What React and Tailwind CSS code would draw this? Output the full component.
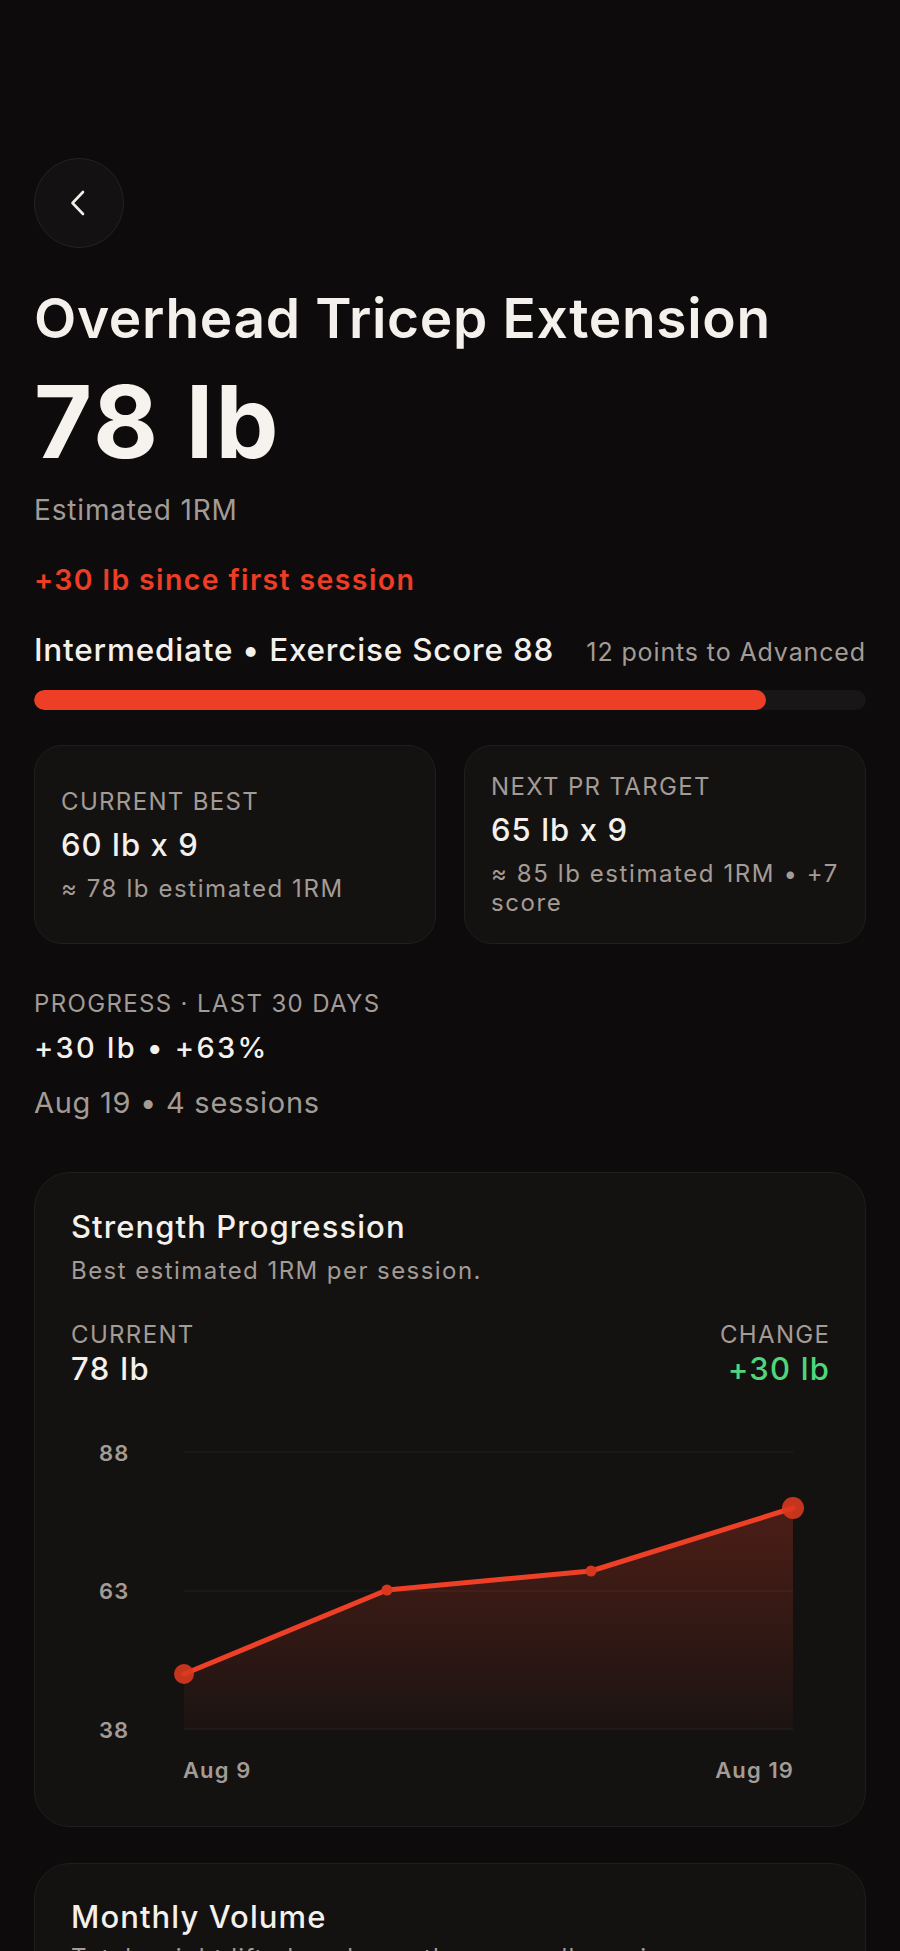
import React from "react";

function BackButton() {
  return (
    <div className="w-[90px] h-[90px] rounded-full border border-[#26231f] bg-[#131111] flex items-center justify-center">
      <svg width="30" height="30" viewBox="0 0 30 30" fill="none">
        <path d="M19 4 L8.5 15 L19 26" stroke="#f2eee9" strokeWidth="2.6" strokeLinecap="round" strokeLinejoin="round" />
      </svg>
    </div>
  );
}

function StatCard({ label, value, sub }) {
  return (
    <div className="rounded-[28px] border border-[#211e1c] bg-[#141211] px-[26px] py-[26px] flex flex-col justify-center">
      <div className="text-[24px] leading-[30px] text-[#a39b95] tracking-[0.056em] whitespace-nowrap">{label}</div>
      <div className="mt-[10px] text-[31px] leading-[36px] font-medium text-[#f4f0eb] tracking-[0.035em] whitespace-nowrap">{value}</div>
      <div className="mt-[11px] text-[24px] leading-[29px] text-[#a39b95] tracking-[0.066em] whitespace-nowrap">{sub}</div>
    </div>
  );
}

function Chart() {
  const pts = [
    [113, 273],
    [316, 189],
    [520, 170],
    [722, 107],
  ];
  const line = pts.map((p, i) => (i === 0 ? "M" : "L") + p[0] + " " + p[1]).join(" ");
  const area = line + " L722 328 L113 328 Z";
  const lbl = { fill: "#a39b95", fontSize: 22, fontWeight: 600, fontFamily: "Inter, sans-serif", letterSpacing: "0.05em" };
  return (
    <svg width="759" height="390" viewBox="0 0 759 390" className="block">
      <defs>
        <linearGradient id="fillg" x1="0" y1="0" x2="0" y2="1" gradientUnits="objectBoundingBox">
          <stop offset="0" stopColor="#ef3e26" stopOpacity="0.26" />
          <stop offset="1" stopColor="#ef3e26" stopOpacity="0.04" />
        </linearGradient>
      </defs>
      <line x1="113" y1="51" x2="722" y2="51" stroke="#1e1c1b" strokeWidth="1.5" />
      <line x1="113" y1="190" x2="722" y2="190" stroke="#1e1c1b" strokeWidth="1.5" />
      <line x1="113" y1="328" x2="722" y2="328" stroke="#1e1c1b" strokeWidth="1.5" />
      <text x="28" y="60" style={lbl}>88</text>
      <text x="28" y="198" style={lbl}>63</text>
      <text x="28" y="337" style={lbl}>38</text>
      <path d={area} fill="url(#fillg)" />
      <path d={line} fill="none" stroke="#ee3f27" strokeWidth="5" strokeLinejoin="round" strokeLinecap="round" />
      <circle cx="113" cy="273" r="10" fill="#d9381f" fillOpacity="0.9" />
      <circle cx="316" cy="189" r="5.5" fill="#d9381f" />
      <circle cx="520" cy="170" r="5.5" fill="#d9381f" />
      <circle cx="722" cy="107" r="11" fill="#d9381f" fillOpacity="0.9" />
      <text x="112" y="377" style={lbl}>Aug 9</text>
      <text x="723" y="377" textAnchor="end" style={lbl}>Aug 19</text>
    </svg>
  );
}

export default function App() {
  return (
    <div className="min-h-[1951px] bg-[#0d0b0c] text-[#f4f0eb] font-['Inter',sans-serif] px-[34px] pt-[158px] pb-10">
      <BackButton />

      <h1 className="mt-[37px] text-[55px] leading-[66px] font-semibold tracking-[0.012em] text-[#f4f0eb]">
        Overhead Tricep Extension
      </h1>
      <div className="mt-[23px] text-[100px] leading-[96px] font-bold tracking-[0.022em] text-[#f6f2ed]">78 lb</div>
      <div className="mt-[22px] text-[28px] leading-[36px] text-[#a39b95] tracking-[0.03em]">Estimated 1RM</div>
      <div className="mt-[34px] text-[28.5px] leading-[36px] font-semibold text-[#ee3d25] tracking-[0.048em]">+30 lb since first session</div>

      <div className="mt-[34px] flex items-baseline justify-between">
        <div className="text-[31.5px] leading-[36px] font-medium text-[#f4f0eb] tracking-[0.025em] whitespace-nowrap">Intermediate • Exercise Score 88</div>
        <div className="text-[25px] leading-[30px] text-[#a39b95] tracking-[0.035em] whitespace-nowrap">12 points to Advanced</div>
      </div>

      <div className="mt-[22px] h-[20px] rounded-full bg-[#181616] overflow-hidden">
        <div className="h-full w-[88%] rounded-full bg-[#ef3e26]" />
      </div>

      <div className="mt-[35px] grid grid-cols-2 gap-[28px]">
        <StatCard label="CURRENT BEST" value="60 lb x 9" sub="≈ 78 lb estimated 1RM" />
        <StatCard
          label="NEXT PR TARGET"
          value="65 lb x 9"
          sub={
            <>
              ≈ 85 lb estimated 1RM • +7
              <br />
              score
            </>
          }
        />
      </div>

      <div className="mt-[45px] text-[24px] leading-[30px] text-[#a39b95] tracking-[0.056em]">PROGRESS · LAST 30 DAYS</div>
      <div className="mt-[11px] text-[29px] leading-[36px] font-medium text-[#f4f0eb] tracking-[0.08em]">+30 lb • +63%</div>
      <div className="mt-[19px] text-[29px] leading-[36px] text-[#a39b95] tracking-[0.025em]">Aug 19 • 4 sessions</div>

      <div className="mt-[51px] rounded-[36px] border border-[#211e1c] bg-[#131211] px-[36px] pt-[36px] pb-[35px]">
        <div className="text-[31px] leading-[36px] font-medium text-[#f4f0eb] tracking-[0.035em]">Strength Progression</div>
        <div className="mt-[12px] text-[24px] leading-[28px] text-[#a39b95] tracking-[0.06em]">Best estimated 1RM per session.</div>
        <div className="mt-[35px] flex justify-between">
          <div>
            <div className="text-[24px] leading-[30px] text-[#a39b95] tracking-[0.056em]">CURRENT</div>
            <div className="mt-[1px] text-[31px] leading-[36px] font-medium text-[#f4f0eb] tracking-[0.045em]">78 lb</div>
          </div>
          <div className="text-right">
            <div className="text-[24px] leading-[30px] text-[#a39b95] tracking-[0.056em] mr-[-0.056em]">CHANGE</div>
            <div className="mt-[1px] text-[31px] leading-[36px] font-medium text-[#4fd67b] tracking-[0.04em] mr-[-0.04em]">+30 lb</div>
          </div>
        </div>
        <div className="mt-[14px]">
          <Chart />
        </div>
      </div>

      <div className="mt-[36px] rounded-[36px] border border-[#211e1c] bg-[#131211] px-[36px] pt-[35px] pb-[200px]">
        <div className="text-[31px] leading-[36px] font-medium text-[#f4f0eb] tracking-[0.035em]">Monthly Volume</div>
        <div className="mt-[9px] text-[24px] leading-[28px] text-[#a39b95] tracking-[0.05em]">Total weight lifted each month across all sessions.</div>
      </div>
    </div>
  );
}
